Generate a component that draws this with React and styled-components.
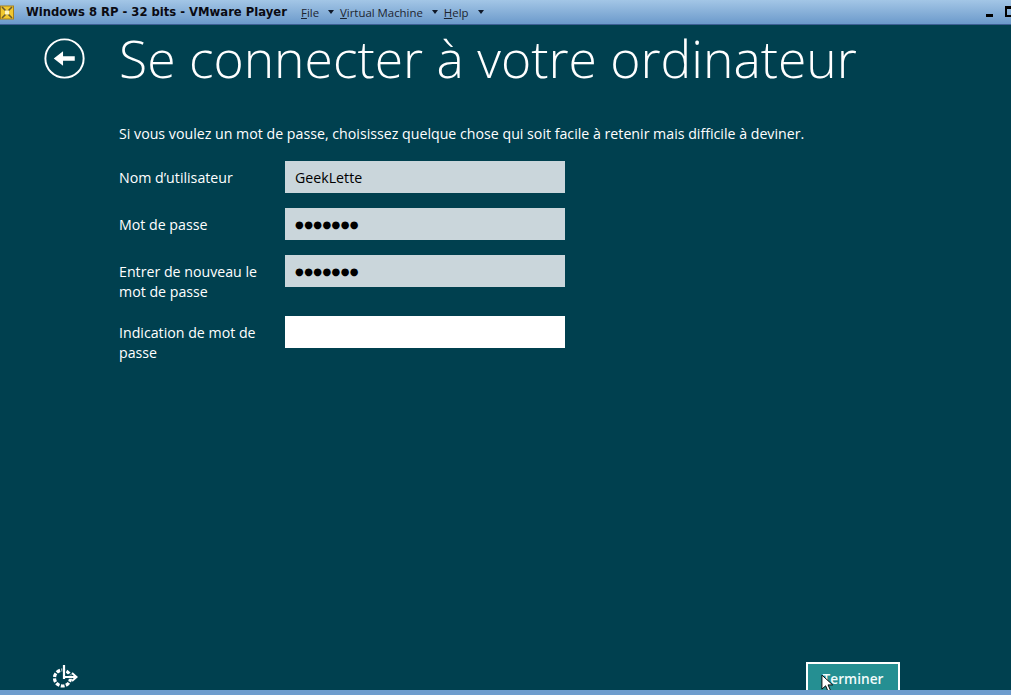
import React from 'react';
import styled, { createGlobalStyle } from 'styled-components';

const GlobalStyle = createGlobalStyle`
  html, body, #root {
    margin: 0;
    padding: 0;
    height: 100%;
  }
  body {
    overflow: hidden;
    background: #00404f;
  }
`;

const fields = [
  { label: "Nom d’utilisateur", value: 'GeekLette' },
  { label: 'Mot de passe', dots: true },
  { label: 'Entrer de nouveau le mot de passe', dots: true },
  { label: 'Indication de mot de passe', empty: true },
];

const App = () => (
  <>
    <GlobalStyle />
    <Page>
      <TitleBar>
        <AppIcon viewBox="0 0 14 15">
          <rect x="0.5" y="1" width="13" height="13" fill="#f0c830" stroke="#a88018" strokeWidth="1" />
          <path d="M2 2l4 4M12 2L8 6M2 13l4-4M12 13L8 9" stroke="#6a5a30" strokeWidth="1.6" />
          <rect x="5" y="5.5" width="4" height="4" fill="#fff6c0" />
        </AppIcon>
        <WindowTitle>Windows 8 RP - 32 bits - VMware Player</WindowTitle>
        <Menu>
          <MenuItem><span><u>F</u>ile</span><Caret /></MenuItem>
          <MenuItem><span><u>V</u>irtual Machine</span><Caret /></MenuItem>
          <MenuItem><span><u>H</u>elp</span><Caret /></MenuItem>
        </Menu>
        <WindowControls>
          <MinimizeBtn />
          <MaximizeBtn />
        </WindowControls>
      </TitleBar>

      <Screen>
        <Header>
          <BackIcon viewBox="0 0 42 42">
            <circle cx="21" cy="21" r="19.6" fill="none" stroke="#fff" strokeWidth="2" />
            <path d="M31.5 18.8H19.5V13.5L10 21l9.5 7.5v-5.3h12z" fill="#fff" />
          </BackIcon>
          <Title>Se connecter à votre ordinateur</Title>
        </Header>

        <Content>
          <Intro>Si vous voulez un mot de passe, choisissez quelque chose qui soit facile à retenir mais difficile à deviner.</Intro>
          <Form>
            {fields.map((f) => (
              <Row key={f.label}>
                <Label>{f.label}</Label>
                <Field $empty={f.empty} $dots={f.dots}>
                  {f.dots ? '●●●●●●●' : f.value}
                </Field>
              </Row>
            ))}
          </Form>
        </Content>

        <Footer>
          <EaseIcon viewBox="0 0 28 24">
            <circle cx="12.5" cy="14" r="8" fill="none" stroke="#fff" strokeWidth="3.2" strokeDasharray="3.8 1.4" />
            <path d="M14 1v15M14 13h10" stroke="#00404f" strokeWidth="3.6" fill="none" />
            <path d="M14 1v14M14 13h11" stroke="#fff" strokeWidth="2.2" fill="none" />
            <path d="M22 9l4.5 4-4.5 4" stroke="#fff" strokeWidth="2" fill="none" />
          </EaseIcon>
          <FinishButton>
            Terminer
            <Cursor viewBox="0 0 14 20">
              <path d="M1 1v15l4-3.5 2.6 6 2.6-1.1-2.6-5.9h5z" fill="#fff" stroke="#000" strokeWidth="1" />
            </Cursor>
          </FinishButton>
        </Footer>
      </Screen>

      <BottomStrip />
    </Page>
  </>
);

export default App;

const Page = styled.div`
  height: 695px;
  width: 1011px;
  display: flex;
  flex-direction: column;
`;

const TitleBar = styled.div`
  height: 25px;
  flex: none;
  display: flex;
  align-items: center;
  box-sizing: border-box;
  background: linear-gradient(#a3c6e6, #6c9acb);
  border-bottom: 1px solid #3d5f94;
`;

const AppIcon = styled.svg`
  width: 14px;
  height: 15px;
  flex: none;
`;

const WindowTitle = styled.div`
  margin-left: 12px;
  font-family: "DejaVu Sans", sans-serif;
  font-size: 11.6px;
  font-weight: 700;
  color: #0a0a12;
  white-space: nowrap;
  width: 275px;
`;

const Menu = styled.div`
  display: flex;
  gap: 6px;
  font-family: "Open Sans", sans-serif;
  font-size: 11.4px;
  color: #1c2430;
`;

const MenuItem = styled.div`
  display: flex;
  align-items: center;
  white-space: nowrap;
  gap: 9px;
`;

const Caret = styled.span`
  width: 0;
  height: 0;
  border-left: 3px solid transparent;
  border-right: 3px solid transparent;
  border-top: 4px solid #101828;
`;

const WindowControls = styled.div`
  margin-left: auto;
  display: flex;
  align-items: flex-end;
  gap: 12px;
  height: 11px;
  margin-top: -2px;
`;

const MinimizeBtn = styled.div`
  width: 7px;
  height: 3px;
  background: #000;
`;

const MaximizeBtn = styled.div`
  width: 4px;
  height: 6px;
  border: 2px solid #000;
  border-top-width: 3px;
  border-right: none;
`;

const Screen = styled.div`
  flex: 1;
  min-height: 0;
  background: #00404f;
  color: #fff;
  display: flex;
  flex-direction: column;
  font-family: "Open Sans", "Noto Sans", sans-serif;
`;

const Header = styled.div`
  display: flex;
  align-items: center;
  box-sizing: border-box;
  padding: 1px 0 0 44px;
  height: 65px;
  flex: none;
`;

const BackIcon = styled.svg`
  width: 41px;
  height: 41px;
  flex: none;
`;

const Title = styled.h1`
  margin: 0 0 0 34px;
  font-size: 51.6px;
  font-weight: 300;
  line-height: 62px;
  white-space: nowrap;
`;

const Content = styled.div`
  flex: 1;
  padding: 31px 0 0 119px;
`;

const Intro = styled.p`
  margin: 0 0 14px;
  font-size: 14.2px;
  line-height: 26px;
  white-space: nowrap;
`;

const Form = styled.div`
  display: flex;
  flex-direction: column;
`;

const Row = styled.div`
  display: flex;
  align-items: flex-start;
  margin-bottom: 15px;
`;

const Label = styled.div`
  width: 166px;
  flex: none;
  padding: 7px 20px 0 0;
  margin-bottom: -1px;
  box-sizing: border-box;
  font-size: 14.2px;
  line-height: 20px;
`;

const Field = styled.div`
  width: 280px;
  height: 32px;
  box-sizing: border-box;
  padding-left: 10px;
  background: ${(p) => (p.$empty ? '#ffffff' : '#cad6db')};
  color: #000;
  font-size: ${(p) => (p.$dots ? '10px' : '14.2px')};
  letter-spacing: ${(p) => (p.$dots ? '0.4px' : '0')};
  line-height: ${(p) => (p.$dots ? '34px' : '33px')};
  font-family: ${(p) => (p.$dots ? '"DejaVu Sans", sans-serif' : 'inherit')};
`;

const Footer = styled.div`
  height: 28px;
  flex: none;
  display: flex;
  align-items: flex-start;
  justify-content: space-between;
  padding: 0 111px 0 50px;
`;

const EaseIcon = styled.svg`
  width: 28px;
  height: 24px;
  margin-top: 2px;
`;

const FinishButton = styled.div`
  position: relative;
  box-sizing: border-box;
  width: 94px;
  height: 33px;
  border: 2px solid #fff;
  background: #258f92;
  text-align: center;
  font-size: 13.7px;
  font-weight: 600;
  line-height: 29px;
  color: #f2fbfb;
`;

const Cursor = styled.svg`
  position: absolute;
  left: 13px;
  top: 10px;
  width: 13px;
  height: 19px;
`;

const BottomStrip = styled.div`
  height: 5px;
  flex: none;
  background: #6e9ccd;
  position: relative;
  z-index: 2;
`;
